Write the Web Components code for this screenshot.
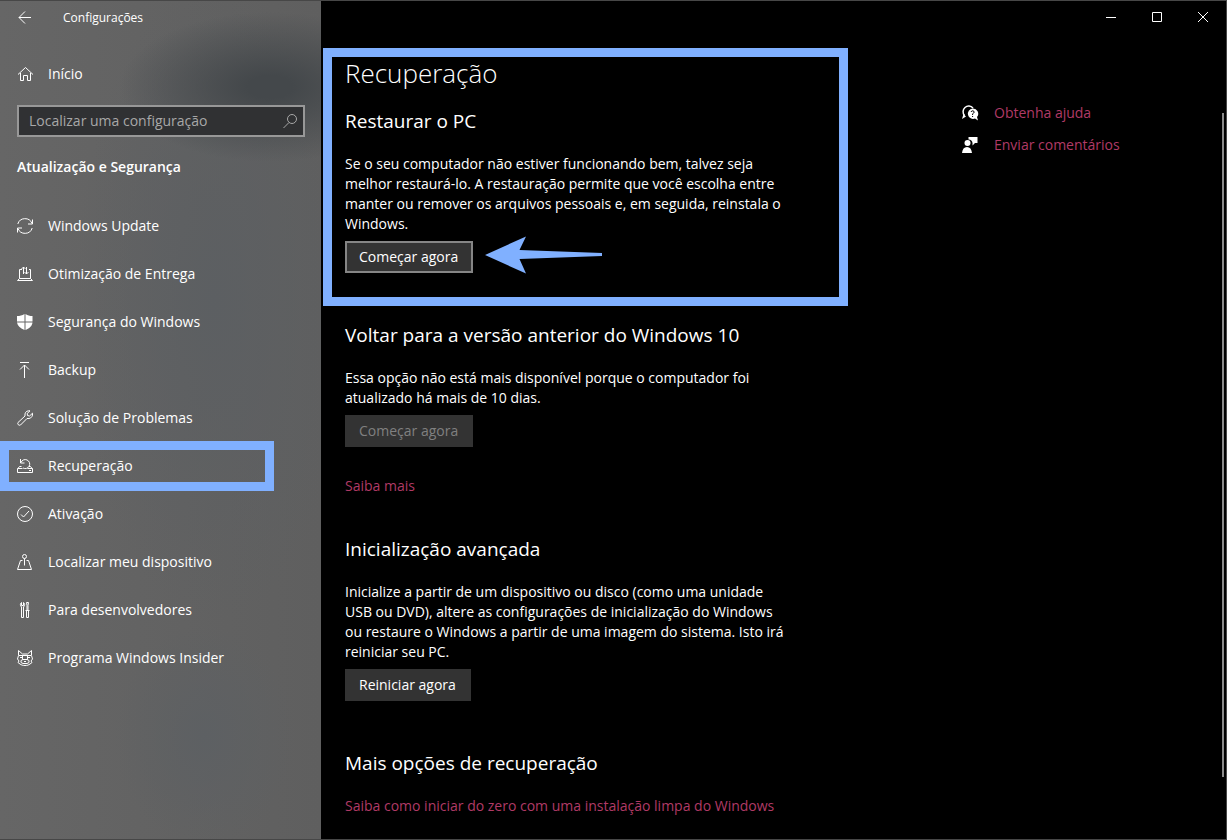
<!DOCTYPE html>
<html lang="pt-BR">
<head>
<meta charset="utf-8">
<meta name="viewport" content="width=device-width, initial-scale=1">
<title>Configurações</title>
<style>
    :root {
        --white: #ffffff;
        --black: #000000;
        --mark: #80b0ff;
        --accent: #b03a66;
        --edge: #474747;
        --button: #333333;
        --small-text: 12px;
        --normal-text: 14px;
        --big-text: 19px;
        --title-text: 26px;
    }
    body {
        margin: 0;
        background: var(--black);
        color: var(--white);
        font-family: "Open Sans", "Noto Sans", sans-serif;
        font-size: var(--normal-text);
        line-height: 20px;
    }
</style>
</head>
<body>
<s-window>
    <s-sidebar slot="sidebar" heading="Atualização e Segurança">
        <s-nav-item icon="sync">Windows Update</s-nav-item>
        <s-nav-item icon="delivery">Otimização de Entrega</s-nav-item>
        <s-nav-item icon="shield">Segurança do Windows</s-nav-item>
        <s-nav-item icon="backup">Backup</s-nav-item>
        <s-nav-item icon="wrench">Solução de Problemas</s-nav-item>
        <s-nav-item icon="recovery" marked>Recuperação</s-nav-item>
        <s-nav-item icon="check">Ativação</s-nav-item>
        <s-nav-item icon="locate">Localizar meu dispositivo</s-nav-item>
        <s-nav-item icon="tools">Para desenvolvedores</s-nav-item>
        <s-nav-item icon="insider">Programa Windows Insider</s-nav-item>
    </s-sidebar>

    <s-section heading="Restaurar o PC" page="Recuperação" marked>
        Se o seu computador não estiver funcionando bem, talvez seja melhor restaurá-lo. A restauração permite que você escolha entre manter ou remover os arquivos pessoais e, em seguida, reinstala o Windows.
        <s-button slot="action" focused arrow>Começar agora</s-button>
    </s-section>
    <s-section heading="Voltar para a versão anterior do Windows 10">
        Essa opção não está mais disponível porque o computador foi atualizado há mais de 10 dias.
        <s-button slot="action" disabled>Começar agora</s-button>
        <s-link slot="more">Saiba mais</s-link>
    </s-section>
    <s-section heading="Inicialização avançada">
        Inicialize a partir de um dispositivo ou disco (como uma unidade USB ou DVD), altere as configurações de inicialização do Windows ou restaure o Windows a partir de uma imagem do sistema. Isto irá reiniciar seu PC.
        <s-button slot="action">Reiniciar agora</s-button>
    </s-section>
    <s-section heading="Mais opções de recuperação">
        <s-link>Saiba como iniciar do zero com uma instalação limpa do Windows</s-link>
    </s-section>

    <s-link slot="aside" icon="help">Obtenha ajuda</s-link>
    <s-link slot="aside" icon="feedback">Enviar comentários</s-link>
</s-window>

<script>
const ICONS = {
    back: '<path d="M14 7.500H2M8 1.500l-6 6 6 6"/>',
    home: '<path d="M1 8.500L8.500 1.500 16 8.500M3.500 7v7.500h3v-5h4v5h3V7"/>',
    search: '<circle cx="10" cy="6" r="4.500"/><path d="M7 9.500L1.500 15"/>',
    sync: '<path d="M.8 6A7.500 7.500 0 0 1 15 5.500M15.200 10A7.500 7.500 0 0 1 1 10.500M15.500 1.500v4.500H11M.5 14.500V10H5"/>',
    delivery: '<path d="M5 3.500H2.500v9h11v-9H12M2.500 12.500L.5 14.500h15l-2-2M6.500 8V1M4.500 3l2-2 2 2M9.500 1v7M7.500 6l2 2 2-2"/>',
    shield: '<path fill="currentColor" stroke="none" d="M0 2c3 0 5-.5 7.500-2v7.500H0zM8.500 0C11 1.500 12.500 2 15.500 2v5.500h-7zM0 8.500h7.500V16C3 14 .5 12 0 8.500zM8.500 8.500h7C15 12 13 14 8.500 16z"/>',
    backup: '<path d="M3 .5h9M7.500 16V3M3 7.500L7.500 3 12 7.500"/>',
    wrench: '<path d="M11.500.8C9 1 7.500 3 8 6L1 12.500c-1 1.500.8 3.500 2.500 2.500L10 8.500c3 .5 5-1 5.500-3.500V3.200L12.500 6l-2-.5-.3-2L13 .8z"/>',
    recovery: '<path d="M4.500 8.500H2.500l-2 2.500v3.500h15V11l-2-2.500H12M.5 10.500h5M10.500 10.500h5M12 12.500h2M3.500 1v4H7.500M4 4.500a4.500 4.500 0 1 1 2 5.500"/>',
    check: '<circle cx="8" cy="8" r="7.500"/><path d="M4 8.500L6.500 11l5.500-6"/>',
    locate: '<circle cx="7.500" cy="2.500" r="2"/><path d="M7.500 4.500v7M5.500 6.500h-2L.5 15.500h14l-3-9h-2"/>',
    tools: '<path d="M4.500 .5v3h2v-3M4.500 .5C3 1.500 3 3.500 4.500 5v10.500h2V5C8 3.500 8 1.500 6.500.5M9.500.5h2l-.5 3v5h-1v-5zM8.500 8.500h4M9.500 8.500v7h2v-7"/>',
    insider: '<path d="M1.500 5.500V.5l4 3.500h5l4-3.500v5M2 5.500h12M1.500 5.500L.5 9l1.500 2-1 1.500 2 1.500c1.500 1 2.500 1.500 5 1.500s3.500-.5 5-1.500l2-1.500-1-1.500L15.500 9l-1-3.500M5.500 6v3.500M10.500 6v3.500M3 7.500h2M11 7.500h2M4 10.500l2-1h4l2 1v2l-2 1H6l-2-1zM7 11.500h2"/>',
    minimize: '<path d="M3 8.500h10"/>',
    maximize: '<path d="M3.500 3.500h9v9h-9z"/>',
    close: '<path d="M3 3l10 10M13 3L3 13"/>',
    help: '<path d="M2.500 10.500A5.300 5.300 0 1 1 11 3" stroke-width="1.500"/><path fill="currentColor" stroke="none" d="M0 14l1.500-5L4 11.500zM10.500 3.500a5.200 5.200 0 1 0 2.500 10l3 2-1-3.500a5.200 5.200 0 0 0-4.500-8.500z"/><path stroke="#000" d="M9 7q.5-1.300 1.800-1.200 1.500.2 1.300 1.500-.1.700-1.500 1.500V10M10.600 11v1"/>',
    feedback: '<path fill="currentColor" stroke="none" d="M6.500 0h9v6H13l-2.500 2.500V6A4 4 0 0 0 6.500 2.500zM0 16c.5-4 2-6 5-6s4.500 2 5 6z"/><circle cx="5.500" cy="6" r="3" fill="currentColor" stroke="none"/>'
};

class SIcon extends HTMLElement {
    connectedCallback() {
        this.attachShadow({ mode: 'open' }).innerHTML = `
            <style>
                :host { display: block; flex: none; width: 16px; height: 16px; }
                svg { display: block; overflow: visible; }
            </style>
            <svg width="16" height="16" viewBox="0 0 16 16" fill="none" stroke="currentColor" aria-hidden="true">${ICONS[this.getAttribute('name')]}</svg>
        `;
    }
}

class SNavItem extends HTMLElement {
    connectedCallback() {
        this.attachShadow({ mode: 'open' }).innerHTML = `
            <style>
                :host { display: block; position: relative; }
                a {
                    display: flex;
                    align-items: center;
                    gap: 15px;
                    height: 48px;
                    padding-left: 17px;
                    color: inherit;
                    text-decoration: none;
                }
                /* highlight frame drawn over the row */
                :host([marked])::after {
                    content: "";
                    position: absolute;
                    inset: -1px 47px -1px 0;
                    border: 9px solid var(--mark);
                    pointer-events: none;
                }
            </style>
            <a href="#"><s-icon name="${this.getAttribute('icon')}"></s-icon><slot></slot></a>
        `;
    }
}

class SSidebar extends HTMLElement {
    connectedCallback() {
        this.attachShadow({ mode: 'open' }).innerHTML = `
            <style>
                :host {
                    display: block;
                    background:
                        radial-gradient(ellipse 150px 75px at 270px 86px, #44484b 15%, #44484b00 100%),
                        radial-gradient(ellipse 140px 320px at 215px 300px, #5c5f62 0%, #5c5f6200 100%),
                        radial-gradient(ellipse 90px 110px at 205px 735px, #5d6063 0%, #5d606300 100%),
                        linear-gradient(90deg, #666666, #5f5f5f);
                }
                .bar {
                    display: flex;
                    align-items: center;
                    gap: 30px;
                    height: 34px;
                    padding-left: 17px;
                    font-size: var(--small-text);
                }
                button {
                    padding: 0;
                    border: 0;
                    background: none;
                    color: inherit;
                }
                .home { margin-top: 15px; }
                .search {
                    display: flex;
                    align-items: center;
                    box-sizing: border-box;
                    height: 32px;
                    margin: 7px 16px 20px 17px;
                    padding: 0 5px 0 10px;
                    border: 2px solid #989898;
                    background: #303133;
                    color: #a8a8a8;
                }
                input {
                    flex: 1;
                    min-width: 0;
                    padding: 0;
                    border: 0;
                    outline: 0;
                    background: none;
                    color: inherit;
                    font: inherit;
                }
                input::placeholder { color: inherit; opacity: 1; }
                h2 {
                    margin: 0 0 25px 17px;
                    font-size: var(--normal-text);
                    font-weight: 600;
                }
            </style>
            <div class="bar">
                <button aria-label="Voltar"><s-icon name="back"></s-icon></button>
                <span>Configurações</span>
            </div>
            <s-nav-item class="home" icon="home">Início</s-nav-item>
            <div class="search">
                <input type="text" placeholder="Localizar uma configuração" aria-label="Localizar uma configuração">
                <s-icon name="search"></s-icon>
            </div>
            <h2>${this.getAttribute('heading')}</h2>
            <nav><slot></slot></nav>
        `;
    }
}

class SButton extends HTMLElement {
    connectedCallback() {
        const arrow = this.hasAttribute('arrow')
            ? '<svg width="118" height="38" viewBox="0 0 118 38" aria-hidden="true"><path fill="var(--mark)" d="M0 19L41 0.500 34.500 14 117 17v3L34.500 23 41 37.500z"/></svg>'
            : '';
        this.attachShadow({ mode: 'open' }).innerHTML = `
            <style>
                :host { display: inline-block; position: relative; }
                button {
                    display: block;
                    height: 32px;
                    padding: 0 13px 0 12px;
                    border: 2px solid var(--button);
                    background: var(--button);
                    color: var(--white);
                    font: inherit;
                }
                :host([focused]) button { border-color: #858585; }
                button:disabled { color: #808080; }
                svg { position: absolute; left: 100%; top: -5px; margin-left: 12px; }
            </style>
            <button ${this.hasAttribute('disabled') ? 'disabled' : ''}><slot></slot></button>${arrow}
        `;
    }
}

class SLink extends HTMLElement {
    connectedCallback() {
        const icon = this.getAttribute('icon');
        this.attachShadow({ mode: 'open' }).innerHTML = `
            <style>
                :host { display: flex; align-items: center; gap: 16px; }
                a { color: var(--accent); text-decoration: none; }
            </style>
            ${icon ? `<s-icon name="${icon}"></s-icon>` : ''}
            <a href="#"><slot></slot></a>
        `;
    }
}

class SSection extends HTMLElement {
    connectedCallback() {
        const page = this.getAttribute('page');
        this.attachShadow({ mode: 'open' }).innerHTML = `
            <style>
                :host { display: block; position: relative; max-width: 446px; margin-bottom: 48px; }
                h1 {
                    margin: 0 0 16px;
                    font-size: var(--title-text);
                    font-weight: 300;
                    line-height: 36px;
                }
                h2 {
                    margin: 0 0 19px;
                    font-size: var(--big-text);
                    font-weight: 400;
                    line-height: 28px;
                }
                slot[name] { display: block; }
                ::slotted([slot="action"]) { margin-top: 7px; vertical-align: top; }
                ::slotted([slot="more"]) { margin: 29px 0 -9px; }
                /* highlight frame around the whole block */
                :host([marked])::after {
                    content: "";
                    position: absolute;
                    inset: -7px -57px -33px -22px;
                    border: 9px solid var(--mark);
                    pointer-events: none;
                }
            </style>
            ${page ? `<h1>${page}</h1>` : ''}
            <h2>${this.getAttribute('heading')}</h2>
            <slot></slot>
            <slot name="action"></slot>
            <slot name="more"></slot>
        `;
    }
}

class SWindow extends HTMLElement {
    connectedCallback() {
        this.attachShadow({ mode: 'open' }).innerHTML = `
            <style>
                :host {
                    display: grid;
                    grid-template-columns: 321px minmax(0, 1fr);
                    box-sizing: border-box;
                    min-height: 100vh;
                    border: 1px solid var(--edge);
                    border-left: 0;
                }
                .pane { position: relative; }
                .controls {
                    display: flex;
                    justify-content: flex-end;
                    height: 32px;
                }
                .controls button {
                    display: grid;
                    place-items: center;
                    width: 46px;
                    padding: 0;
                    border: 0;
                    background: none;
                    color: inherit;
                }
                .body {
                    display: grid;
                    grid-template-columns: minmax(0, 1fr) 264px;
                    padding: 22px 0 0 24px;
                }
                aside {
                    display: flex;
                    flex-direction: column;
                    gap: 12px;
                    padding-top: 48px;
                }
                .thumb {
                    position: absolute;
                    top: 112px;
                    right: 2px;
                    bottom: 62px;
                    width: 2px;
                    background: #8a8a8a;
                }
                main { margin-bottom: -48px; }
            </style>
            <slot name="sidebar"></slot>
            <div class="pane">
                <div class="controls">
                    <button aria-label="Minimizar"><s-icon name="minimize"></s-icon></button>
                    <button aria-label="Maximizar"><s-icon name="maximize"></s-icon></button>
                    <button aria-label="Fechar"><s-icon name="close"></s-icon></button>
                </div>
                <div class="body">
                    <main><slot></slot></main>
                    <aside><slot name="aside"></slot></aside>
                </div>
                <div class="thumb"></div>
            </div>
        `;
    }
}

customElements.define('s-icon', SIcon);
customElements.define('s-nav-item', SNavItem);
customElements.define('s-button', SButton);
customElements.define('s-link', SLink);
customElements.define('s-section', SSection);
customElements.define('s-sidebar', SSidebar);
customElements.define('s-window', SWindow);
</script>
</body>
</html>
